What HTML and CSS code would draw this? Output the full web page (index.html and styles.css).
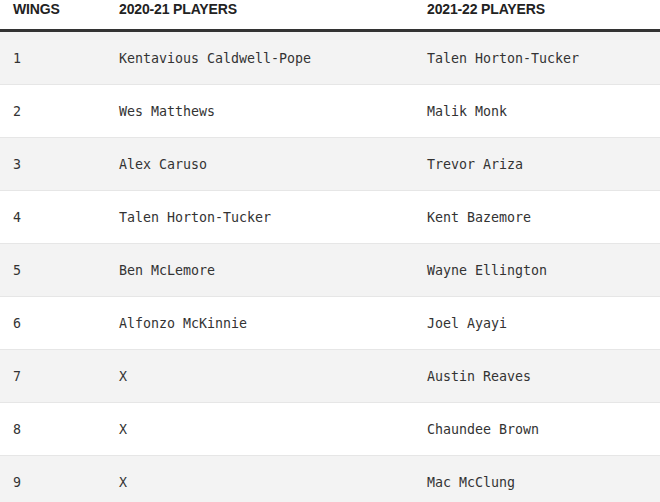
FILE: index.html
```html
<!DOCTYPE html>
<html>
<head>
<meta charset="utf-8">
<link rel="stylesheet" href="styles.css">
</head>
<body>
<div class="table">
  <div class="row head">
    <div class="cell">WINGS</div>
    <div class="cell">2020-21 PLAYERS</div>
    <div class="cell">2021-22 PLAYERS</div>
  </div>
  <div class="row odd"><div class="cell">1</div><div class="cell">Kentavious Caldwell-Pope</div><div class="cell">Talen Horton-Tucker</div></div>
  <div class="row"><div class="cell">2</div><div class="cell">Wes Matthews</div><div class="cell">Malik Monk</div></div>
  <div class="row odd"><div class="cell">3</div><div class="cell">Alex Caruso</div><div class="cell">Trevor Ariza</div></div>
  <div class="row"><div class="cell">4</div><div class="cell">Talen Horton-Tucker</div><div class="cell">Kent Bazemore</div></div>
  <div class="row odd"><div class="cell">5</div><div class="cell">Ben McLemore</div><div class="cell">Wayne Ellington</div></div>
  <div class="row"><div class="cell">6</div><div class="cell">Alfonzo McKinnie</div><div class="cell">Joel Ayayi</div></div>
  <div class="row odd"><div class="cell">7</div><div class="cell">X</div><div class="cell">Austin Reaves</div></div>
  <div class="row"><div class="cell">8</div><div class="cell">X</div><div class="cell">Chaundee Brown</div></div>
  <div class="row odd"><div class="cell">9</div><div class="cell">X</div><div class="cell">Mac McClung</div></div>
</div>
</body>
</html>
```
FILE: styles.css
```css
html, body {
  margin: 0;
  padding: 0;
  background: #ffffff;
}
.table {
  display: flex;
  flex-direction: column;
  width: 660px;
}
.row {
  display: grid;
  grid-template-columns: 106px 308px 1fr;
  padding-left: 13px;
  height: 52px;
  align-items: center;
  border-bottom: 1px solid #e6e6e6;
  font-family: "DejaVu Sans Mono", "Liberation Mono", monospace;
  font-size: 13.3px;
  color: #333333;
  background: #ffffff;
}
.row.odd {
  background: #f3f3f3;
}
.row.head {
  height: auto;
  align-items: start;
  line-height: 18px;
  padding-bottom: 11px;
  border-bottom: 3px solid #333333;
  font-family: "Liberation Sans", Arial, sans-serif;
  font-weight: bold;
  font-size: 14px;
  letter-spacing: -0.15px;
  color: #222222;
}
```
